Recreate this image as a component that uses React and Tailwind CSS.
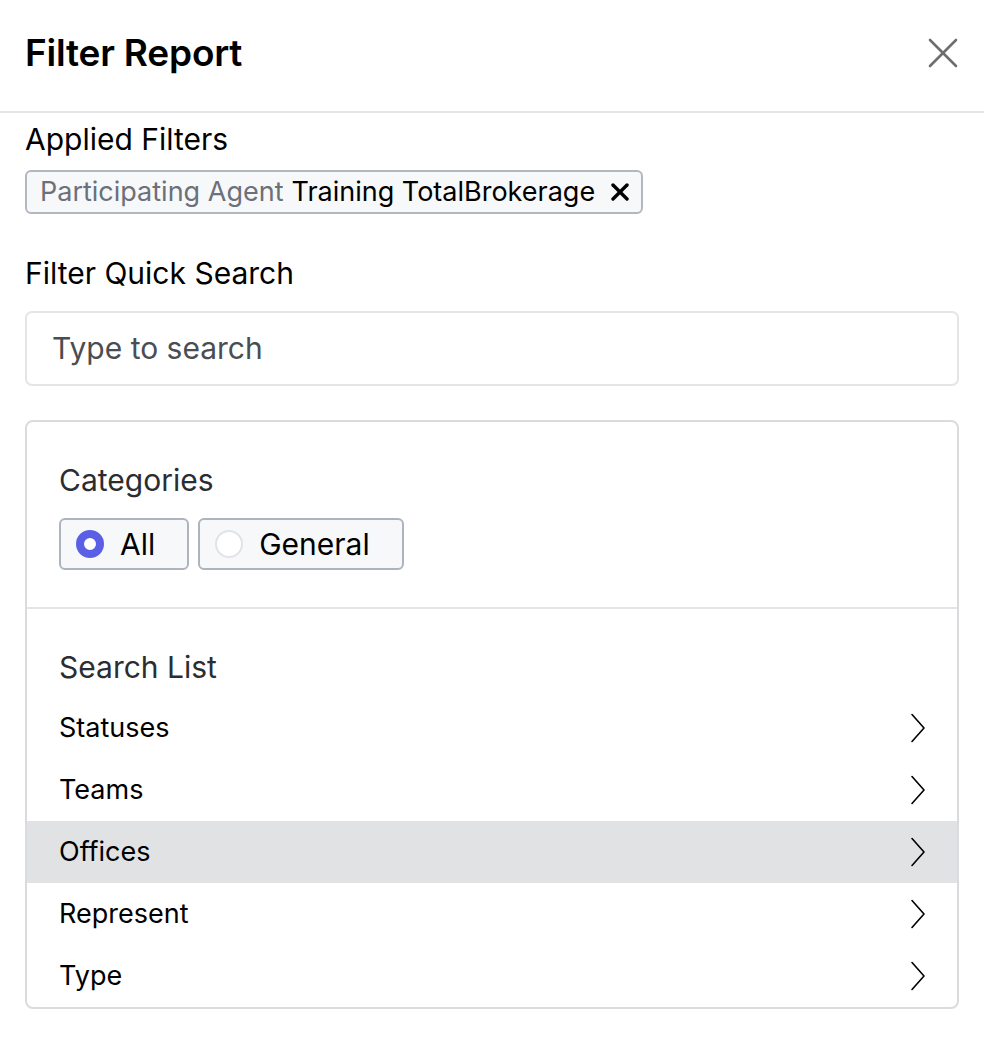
const items = ["Statuses", "Teams", "Offices", "Represent", "Type"];

const Chevron = () => (
  <svg width="16" height="30" viewBox="0 0 16 30" fill="none" stroke="currentColor" strokeWidth="1.6" strokeLinecap="round" strokeLinejoin="round">
    <polyline points="2,1.5 14,15 2,28.5" />
  </svg>
);

const Radio = ({ label, checked }) => (
  <div className="flex h-[52px] items-center gap-[16px] rounded-[6px] border-2 border-[#aeb4bd] bg-[#f7f8fa] pl-[15px] pr-[32px]">
    {checked ? (
      <span className="h-[28px] w-[28px] rounded-full border-[8px] border-[#5b5fe6] bg-white" />
    ) : (
      <span className="h-[28px] w-[28px] rounded-full border-2 border-[#e1e3e7] bg-white" />
    )}
    <span className="text-[30px] leading-[36px] text-black">{label}</span>
  </div>
);

export default function App() {
  return (
    <div className="min-h-[1052px] w-[984px] bg-white font-['Inter',sans-serif] text-black">
      <div className="flex h-[113px] items-center justify-between border-b-2 border-[#e3e5e8] pb-[6px] pl-[25px] pr-[26px]">
        <h1 className="text-[37px] font-semibold leading-[44px] tracking-[-0.2px]">Filter Report</h1>
        <svg width="30" height="30" viewBox="0 0 30 30" stroke="#6e6e6e" strokeWidth="2.6" strokeLinecap="round">
          <line x1="2" y1="2" x2="28" y2="28" />
          <line x1="28" y1="2" x2="2" y2="28" />
        </svg>
      </div>

      <div className="px-[25px]">
        <div className="pt-[8px] text-[30px] leading-[36px]">Applied Filters</div>
        <div className="mt-[13px] inline-flex h-[44px] items-center gap-[8px] rounded-[6px] border-2 border-[#b2b8c0] bg-[#f7f8fa] pl-[13px] pr-[12px] text-[27px]">
          <span className="text-[#6b7079]">Participating Agent</span>
          <span>Training TotalBrokerage</span>
          <svg width="18" height="18" viewBox="0 0 18 18" stroke="black" strokeWidth="3.4" strokeLinecap="round" className="ml-[8px]">
            <line x1="2" y1="2" x2="16" y2="16" />
            <line x1="16" y1="2" x2="2" y2="16" />
          </svg>
        </div>

        <div className="mt-[41px] text-[30px] leading-[36px]">Filter Quick Search</div>
        <div className="mt-[20px] flex h-[75px] items-center rounded-[7px] border-2 border-[#e3e5e8] px-[25px] text-[30px] text-[#4a4d52]">
          Type to search
        </div>

        <div className="mt-[34px] overflow-hidden rounded-[8px] border-2 border-[#d9dbde]">
          <div className="border-b-2 border-[#e3e5e8] px-[32px] pb-[37px] pt-[40px]">
            <div className="text-[30px] leading-[36px] text-[#2b2d31]">Categories</div>
            <div className="mt-[20px] flex gap-[9px]">
              <Radio label="All" checked />
              <Radio label="General" />
            </div>
          </div>
          <div className="pt-[40px]">
            <div className="px-[32px] text-[30px] leading-[36px] text-[#2b2d31]">Search List</div>
            <div className="mt-[12px]">
              {items.map((it) => (
                <div
                  key={it}
                  className={`flex h-[62px] items-center justify-between pl-[32px] pr-[31px] text-[27px] ${it === "Offices" ? "bg-[#e1e2e4]" : ""}`}
                >
                  <span>{it}</span>
                  <Chevron />
                </div>
              ))}
            </div>
          </div>
        </div>
      </div>
    </div>
  );
}
